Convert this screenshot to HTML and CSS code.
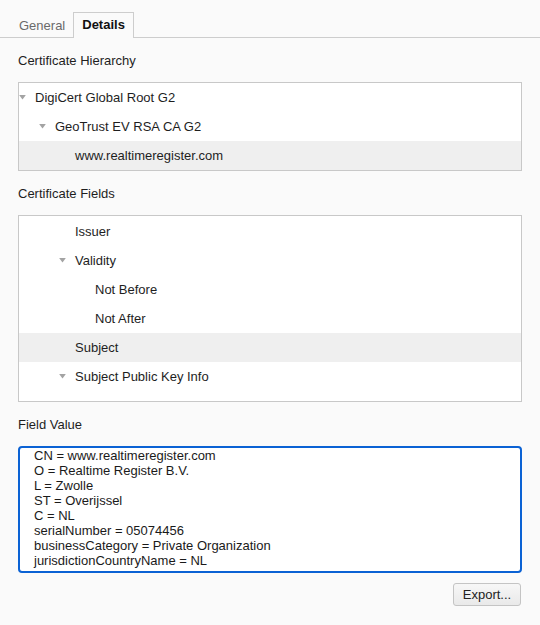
FILE: index.html
```html
<!DOCTYPE html>
<html>
<head>
<meta charset="utf-8">
<link rel="stylesheet" href="styles.css">
</head>
<body>
<div class="tabs">
  <div class="tab">General</div>
  <div class="tab active">Details</div>
</div>
<div class="content">
  <div class="label first">Certificate Hierarchy</div>
  <div class="tree hierarchy">
    <div class="row lvl0"><svg class="tri" viewBox="0 0 8 6"><polygon points="0,0 8,0 4,5.5"/></svg><span>DigiCert Global Root G2</span></div>
    <div class="row lvl1"><svg class="tri" viewBox="0 0 8 6"><polygon points="0,0 8,0 4,5.5"/></svg><span>GeoTrust EV RSA CA G2</span></div>
    <div class="row lvl2 selected"><span>www.realtimeregister.com</span></div>
  </div>
  <div class="label">Certificate Fields</div>
  <div class="tree fields">
    <div class="row lvl2"><span>Issuer</span></div>
    <div class="row lvl2"><svg class="tri" viewBox="0 0 8 6"><polygon points="0,0 8,0 4,5.5"/></svg><span>Validity</span></div>
    <div class="row lvl3"><span>Not Before</span></div>
    <div class="row lvl3"><span>Not After</span></div>
    <div class="row lvl2 selected"><span>Subject</span></div>
    <div class="row lvl2"><svg class="tri" viewBox="0 0 8 6"><polygon points="0,0 8,0 4,5.5"/></svg><span>Subject Public Key Info</span></div>
    <div class="row lvl3"><span>Subject Public Key Algorithm</span></div>
  </div>
  <div class="label">Field Value</div>
  <div class="value">
    <div>CN = www.realtimeregister.com</div>
    <div>O = Realtime Register B.V.</div>
    <div>L = Zwolle</div>
    <div>ST = Overijssel</div>
    <div>C = NL</div>
    <div>serialNumber = 05074456</div>
    <div>businessCategory = Private Organization</div>
    <div>jurisdictionCountryName = NL</div>
  </div>
  <div class="actions">
    <button class="btn">Export...</button>
  </div>
</div>
</body>
</html>
```
FILE: styles.css
```css
html, body {
  margin: 0;
  padding: 0;
  background: #fafafa;
  font-family: "Liberation Sans", Arial, sans-serif;
  font-size: 13px;
  color: #1e1e1e;
}
.tabs {
  display: flex;
  align-items: flex-end;
  height: 37px;
  padding-left: 8px;
  border-bottom: 1px solid #cdcdcd;
}
.tab {
  height: 24px;
  line-height: 24px;
  padding: 0 10px;
  color: #6a6a6a;
  margin-bottom: -1px;
  border: 1px solid transparent;
  border-bottom: none;
}
.tab:first-child {
  padding-right: 7px;
}
.tab.active {
  color: #111;
  font-weight: bold;
  background: #fafafa;
  border-color: #cdcdcd;
  padding: 0 8px 1px;
}
.content {
  padding: 0 18px;
  display: flex;
  flex-direction: column;
}
.label {
  line-height: 16px;
  margin: 15px 0 13px;
}
.tree {
  background: #fff;
  border: 1px solid #c8c8c8;
  overflow: hidden;
}
.fields {
  box-sizing: border-box;
  height: 187px;
  padding-top: 1px;
}
.row {
  height: 29px;
  display: flex;
  align-items: center;
  white-space: nowrap;
}
.row.selected {
  background: #efefef;
}
.tri {
  width: 7px;
  height: 5px;
  fill: #a3a3a3;
  margin-right: 9px;
  margin-left: -16px;
}
.lvl0 { padding-left: 16px; }
.lvl1 { padding-left: 36px; }
.lvl2 { padding-left: 56px; }
.lvl3 { padding-left: 76px; }
.value {
  background: #fff;
  border: 2px solid #0b62d4;
  border-radius: 4px;
  height: 123px;
  padding: 0 14px;
  line-height: 15px;
  color: #1a1a1a;
}
.actions {
  display: flex;
  justify-content: flex-end;
  margin-top: 10px;
}
.btn {
  font-family: "Liberation Sans", Arial, sans-serif;
  font-size: 13px;
  color: #222;
  height: 23px;
  width: 68px;
  padding: 0;
  margin-right: 1px;
  border: 1px solid #c4c4c4;
  border-radius: 3px;
  background: linear-gradient(#f7f7f7, #e9e9e9);
}
```
